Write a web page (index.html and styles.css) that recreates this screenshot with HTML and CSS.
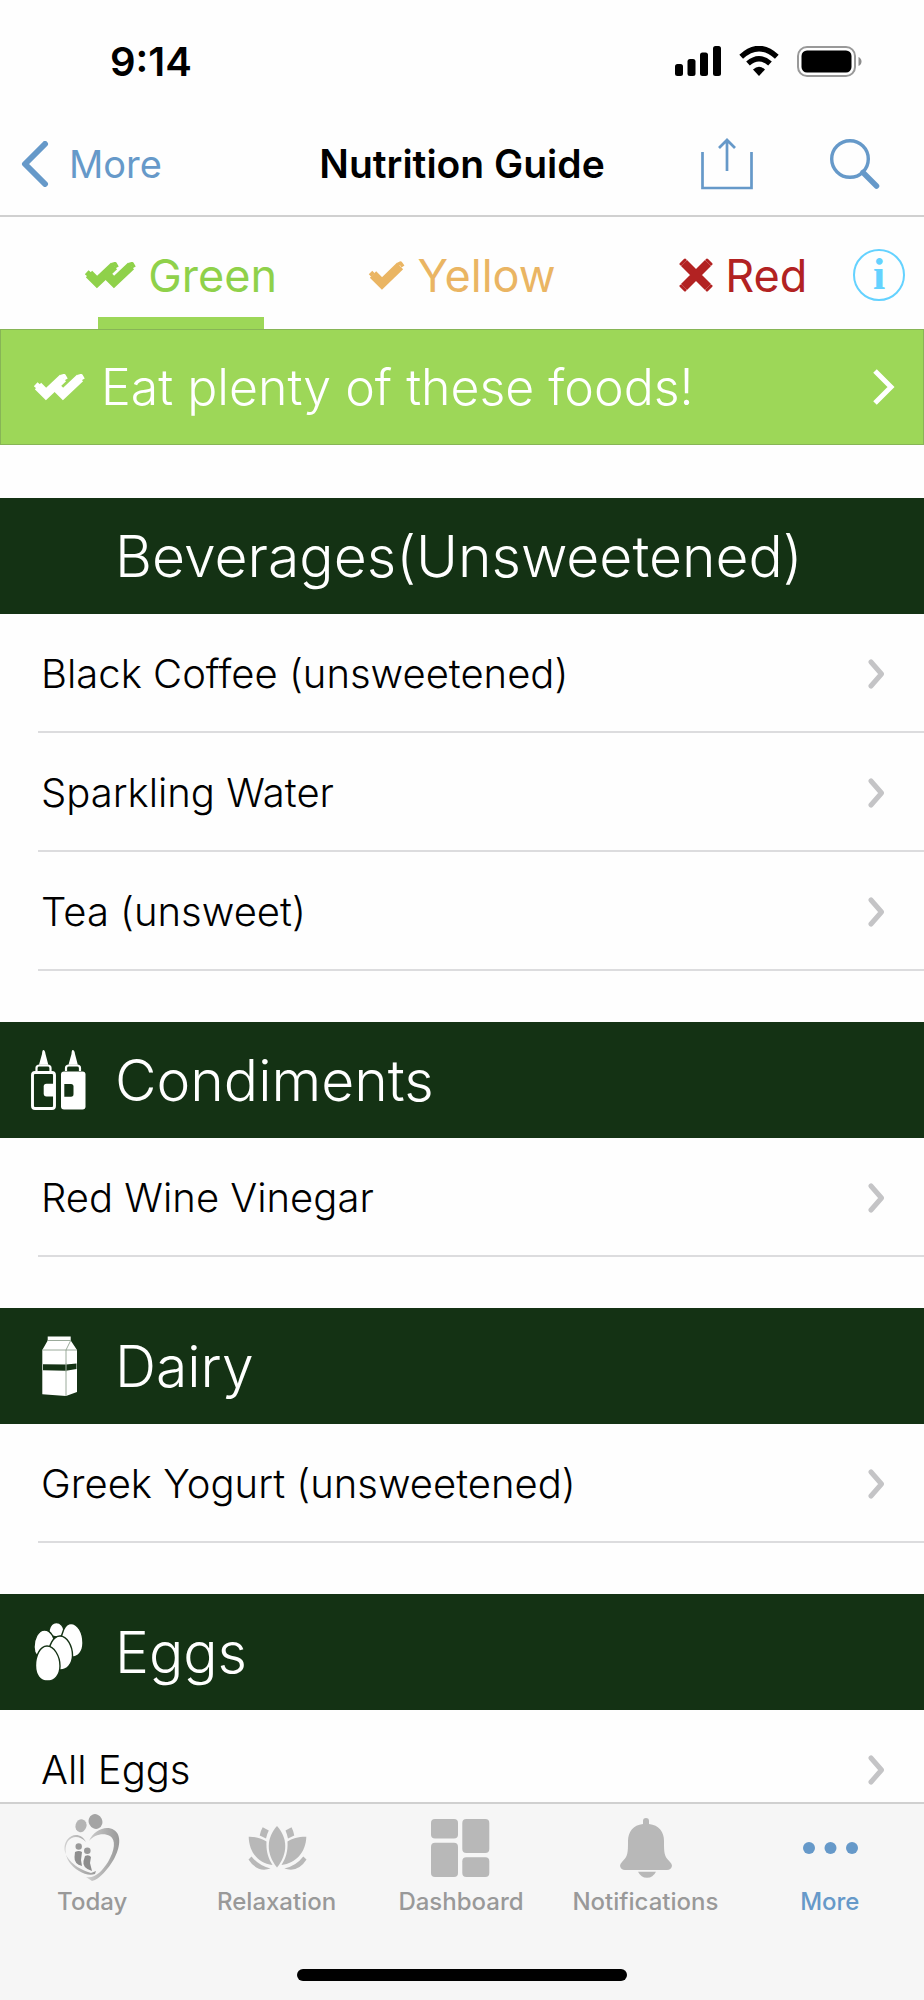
FILE: index.html
```html
<!DOCTYPE html>
<html lang="en">

<head>
    <meta charset="UTF-8">
    <meta name="viewport" content="width=device-width, initial-scale=1.0">
    <title>Nutrition Guide</title>
    <link rel="stylesheet" href="styles.css">
</head>

<body>
    <!-- shared icons -->
    <svg class="sprite" aria-hidden="true">
        <symbol id="chevron" viewBox="0 0 16 30">
            <path d="M3 3 L13.500 15 L3 27" fill="none" stroke="currentColor" stroke-width="5" stroke-linecap="round" stroke-linejoin="round" />
        </symbol>
        <symbol id="double-check" viewBox="0 0 52 27">
            <g fill="none" stroke="currentColor" stroke-width="9">
                <path d="M5 12 L13 20 L30 4" />
                <path d="M22 12 L30 20 L47 4" />
            </g>
            <g fill="none" stroke="currentColor" stroke-width="4" stroke-linejoin="round">
                <path d="M2.300 13.500 L6 9.500 M27.500 3 L31 2 L33 5.500 M44.500 3 L48 2 L50 5.500" />
            </g>
        </symbol>
    </svg>

    <div class="status-bar">
        <span class="time">9:14</span>
        <div class="status-icons">
            <svg width="46" height="30" viewBox="0 0 46 30">
                <rect x="0" y="18" width="8" height="12" rx="2.500" />
                <rect x="12.500" y="13" width="8" height="17" rx="2.500" />
                <rect x="25" y="6.500" width="8" height="23.500" rx="2.500" />
                <rect x="38" y="0" width="8" height="30" rx="2.500" />
            </svg>
            <svg width="40" height="30" viewBox="0 0 40 30">
                <path d="M20 30 L14 23.500 Q20 18 26 23.500 Z" />
                <path d="M9 17.500 Q20 8 31 17.500" fill="none" stroke="#000" stroke-width="5.500" />
                <path d="M2.200 10.700 Q20 -5.500 37.800 10.700" fill="none" stroke="#000" stroke-width="5.500" />
            </svg>
            <svg width="65" height="31" viewBox="0 0 65 31">
                <rect x="1" y="1" width="57" height="29" rx="9" fill="none" stroke="#999" stroke-width="2" />
                <rect x="4.500" y="4.500" width="50" height="22" rx="5.500" />
                <path d="M61.500 11 Q64.500 12.500 64.500 15.500 Q64.500 18.500 61.500 20 Z" fill="#8c8c8c" />
            </svg>
        </div>
    </div>

    <header class="nav-bar">
        <a class="back" href="#more">
            <svg width="28" height="46" viewBox="0 0 28 46">
                <path d="M24 3 L4 23 L24 43" fill="none" stroke="currentColor" stroke-width="6" stroke-linecap="round" stroke-linejoin="round" />
            </svg>
            More
        </a>
        <h1>Nutrition Guide</h1>
        <div class="nav-actions">
            <button type="button" aria-label="Share">
                <svg width="52" height="52" viewBox="0 0 52 52">
                    <path d="M1.500 14 V50 H50.500 V14 M26 33 V2 M18 10 L26 2 L34 10" fill="none" stroke="currentColor" stroke-width="2.700" />
                </svg>
            </button>
            <button type="button" aria-label="Search">
                <svg width="50" height="50" viewBox="0 0 50 50">
                    <circle cx="20" cy="20" r="18.300" fill="none" stroke="currentColor" stroke-width="3.400" />
                    <path d="M33 33.500 L46.500 47" stroke="currentColor" stroke-width="5.500" stroke-linecap="round" />
                </svg>
            </button>
        </div>
    </header>

    <nav class="tabs">
        <a class="tab green active" href="#green">
            <svg width="52" height="27"><use href="#double-check" /></svg>
            Green
        </a>
        <a class="tab yellow" href="#yellow">
            <svg width="37" height="29" viewBox="0 0 37 29">
                <path d="M5 13.500 L14 22.500 L32 5" fill="none" stroke="currentColor" stroke-width="9" />
                <path d="M2 14.500 L5.500 11 M29.500 3.500 L32.500 2 L35 5.500" fill="none" stroke="currentColor" stroke-width="3.500" stroke-linejoin="round" />
            </svg>
            Yellow
        </a>
        <a class="tab red" href="#red">
            <svg width="34" height="34" viewBox="0 0 34 34">
                <path d="M5 5 L29 29 M29 5 L5 29" stroke="currentColor" stroke-width="8.500" />
                <path d="M2 6 L6 2 M28 2 L32 6 M2 28 L6 32 M28 32 L32 28" stroke="currentColor" stroke-width="3" stroke-linecap="round" />
            </svg>
            Red
        </a>
        <button class="info" type="button" aria-label="Info">i</button>
    </nav>

    <main>
        <a class="banner" href="#plenty">
            <svg width="52" height="27"><use href="#double-check" /></svg>
            <span>Eat plenty of these foods!</span>
            <svg width="22" height="36" viewBox="0 0 22 36">
                <path d="M2 2 L18 18 L2 34" fill="none" stroke="currentColor" stroke-width="5" />
            </svg>
        </a>

        <section>
            <h2><span class="icon"></span>Beverages(Unsweetened)</h2>
            <ul>
                <li><a href="#coffee">Black Coffee (unsweetened)<svg width="16" height="30"><use href="#chevron" /></svg></a></li>
                <li><a href="#water">Sparkling Water<svg width="16" height="30"><use href="#chevron" /></svg></a></li>
                <li><a href="#tea">Tea (unsweet)<svg width="16" height="30"><use href="#chevron" /></svg></a></li>
            </ul>
        </section>

        <section>
            <h2>
                <svg class="icon" viewBox="0 0 58 60">
                    <path d="M13.300 0 Q15 0 15.500 4 L18.300 14.800 H9 L12 4 Q12.300 0 13.300 0 Z" fill="#fff" />
                    <path d="M6.500 21 V18 Q6.500 15.500 9.500 15.500 H17.500 Q20.500 15.500 20.500 18 V21" fill="none" stroke="#fff" stroke-width="2.200" />
                    <rect x="2.500" y="22.500" width="22" height="36" rx="2.500" fill="none" stroke="#fff" stroke-width="2.900" />
                    <path d="M24 33.800 H16.500 Q13.700 33.800 13.700 36.500 V43.500 Q13.700 46.500 16.500 46.500 H24 Z" fill="#fff" />
                    <path d="M42.700 0 Q44.500 0 45 4 L47.800 14.800 H38.500 L41.500 4 Q41.700 0 42.700 0 Z" fill="#fff" />
                    <path d="M36 21 V18 Q36 15.500 39 15.500 H47 Q50 15.500 50 18 V21" fill="none" stroke="#fff" stroke-width="2.200" />
                    <rect x="31" y="21.500" width="24.500" height="38" rx="3" fill="#fff" />
                    <path d="M34.300 34 H41 Q43.500 34 43.500 36.500 V44 Q43.500 46.800 41 46.800 H34.300 Z" fill="#143214" />
                </svg>
                Condiments
            </h2>
            <ul>
                <li><a href="#vinegar">Red Wine Vinegar<svg width="16" height="30"><use href="#chevron" /></svg></a></li>
            </ul>
        </section>

        <section>
            <h2>
                <svg class="icon" viewBox="0 0 58 60">
                    <path d="M17.700 0.500 H40.700 V4.500 L47 14 V56 L36 60 L12.300 58.300 V14 L17.700 4.500 Z" fill="#fff" />
                    <path d="M17.700 4.500 H40.700 L36 14 V60 M12.300 14 H47" fill="none" stroke="#8fa08f" stroke-width="0.900" />
                    <path d="M13 28.300 L36 28.500 L46.500 27.500 V33 L36 34.800 L13 34.300 Z" fill="#143214" />
                    <path d="M36 27 V36" stroke="#b5c2b5" stroke-width="0.900" />
                </svg>
                Dairy
            </h2>
            <ul>
                <li><a href="#yogurt">Greek Yogurt (unsweetened)<svg width="16" height="30"><use href="#chevron" /></svg></a></li>
            </ul>
        </section>

        <section>
            <h2>
                <svg class="icon" viewBox="0 0 58 60">
                    <g fill="#fff" stroke="#143214" stroke-width="1.400">
                        <path d="M26.300 0.500 C31 0.500 34 5 34 9 C34 13 31 15 26.500 15 C22 15 19 12 19 8 C20 4 22.500 0.500 26.300 0.500 Z" />
                        <path d="M14.500 8 C21 8 25.500 17 25.500 25 C25.500 32 21 36 14.500 36 C8 36 4 32 4 25 C4 17 8 8 14.500 8 Z" />
                        <path d="M41 1.500 C48 1.500 53 11 53 21 C53 30 48 35 42 35 C35 35 31 29 31 20 C31 11 35 1.500 41 1.500 Z" />
                        <path d="M30 14 C37 14 42.500 24 42.500 33.500 C42.500 42 37 48 30.500 48 C23 48 18.500 42 18.500 33 C18.500 24 23 14 30 14 Z" />
                        <path d="M17 24 C24 24 30 34 30 44 C30 53 25 59 17.500 59 C10 59 5.500 53 5.500 43.500 C5.500 34 10 24 17 24 Z" />
                    </g>
                </svg>
                Eggs
            </h2>
            <ul>
                <li><a href="#eggs">All Eggs<svg width="16" height="30"><use href="#chevron" /></svg></a></li>
            </ul>
        </section>
    </main>

    <footer class="tab-bar">
        <nav>
            <a href="#today">
                <svg width="64" height="68" viewBox="0 0 64 68">
                    <defs>
                        <linearGradient id="heart" x1="0" y1="0" x2="1" y2="0">
                            <stop offset="0" stop-color="#d0d0d0" />
                            <stop offset="1" stop-color="#999" />
                        </linearGradient>
                    </defs>
                    <ellipse cx="21" cy="11.700" rx="5.500" ry="6.500" fill="#b4b4b4" transform="rotate(15 21 11.700)" />
                    <ellipse cx="35.500" cy="7.500" rx="6.800" ry="7.500" fill="#a4a4a4" transform="rotate(-25 35.500 7.500)" />
                    <path d="M26 28 C22 20 13 18 7 26 C-1 38 11 53 31 59 L36 57 L35 60 C30 62 24 60 19 57 C7 50 2 37 8 27 C13 21 20 22 26 28 Z" fill="url(#heart)" />
                    <path d="M29 27 C34 16 46 11 54 16 C62 21 60 34 54 45 C48 55 40 65 32 67 L26 63 C35 65 42 57 48 48 C55 36 56 26 50 22 C43 18 34 21 29 27 Z" fill="url(#heart)" />
                    <circle cx="18.700" cy="32.500" r="3.200" fill="#999" />
                    <circle cx="27.300" cy="36.700" r="3.300" fill="#999" />
                    <path d="M15 38 Q19 36 22 38 L21 46 L22 52 Q14 50 14.500 43 Z M25 42 Q29 40 31 43 L30 49 L32 57 Q22 54 23.500 47 Z" fill="#8e8e8e" />
                </svg>
                Today
            </a>
            <a href="#relaxation">
                <svg width="64" height="68" viewBox="0 0 64 68" fill="#b8b8b8">
                    <path d="M32 12 C43 24 43 40 32 53.500 C21 40 21 24 32 12 Z" />
                    <path d="M3.700 22.700 C11 22.500 17 24.500 21.500 27.500 C21 37 23 44 27.500 51 C13 49 4 38 3.700 22.700 Z" />
                    <path d="M61.300 22.700 C54 22.500 47 24.500 42.500 27.500 C43 37 41 44 36.500 51 C51 49 61 38 61.300 22.700 Z" />
                    <path d="M17.700 13.300 L23.800 16.500 Q22 20 21 24.500 L14.700 21.500 Q15.500 17 17.700 13.300 Z" />
                    <path d="M46.500 13.300 L40.500 16.500 Q42 20 43 24.500 L49.300 21.500 Q48.500 17 46.500 13.300 Z" />
                    <path d="M6.500 42.500 L3.500 45.500 Q12 59 25.500 54.500 Q14 52 6.500 42.500 Z" />
                    <path d="M58.300 42.500 L61.500 45.500 Q53 59 39.300 54.500 Q51 52 58.300 42.500 Z" />
                </svg>
                Relaxation
            </a>
            <a href="#dashboard">
                <svg width="64" height="68" viewBox="0 0 64 68" fill="#b8b8b8">
                    <rect x="2" y="5" width="27" height="19.500" rx="4" />
                    <rect x="2" y="28.700" width="27" height="34.300" rx="4" />
                    <rect x="33.300" y="5" width="27" height="34" rx="4" />
                    <rect x="33.300" y="43.300" width="27" height="19.700" rx="4" />
                </svg>
                Dashboard
            </a>
            <a href="#notifications">
                <svg width="64" height="68" viewBox="0 0 64 68" fill="#b8b8b8">
                    <path d="M30 10 V7 Q30 4 33 4 Q36 4 36 7 V10 C46 11 51 18 51 27 C51 39 51 42 57 48 Q59 50 59 52 Q58 56 54 56 H12 Q8 56 7 52 Q7 50 9 48 C15 42 15 39 15 27 C15 18 20 11 30 10 Z" />
                    <path d="M25 57.700 H43 Q40 63.700 34 63.700 Q28 63.700 25 57.700 Z" />
                </svg>
                Notifications
            </a>
            <a class="current" href="#more">
                <svg width="64" height="68" viewBox="0 0 64 68" fill="currentColor">
                    <circle cx="11" cy="34" r="6" />
                    <circle cx="32.500" cy="34" r="6" />
                    <circle cx="54" cy="34" r="6" />
                </svg>
                More
            </a>
        </nav>
        <div class="home-indicator"></div>
    </footer>
</body>

</html>
```
FILE: styles.css
```css
* {
    padding: 0;
    margin: 0;
    box-sizing: border-box;
}

body {
    display: flex;
    flex-direction: column;
    height: 100vh;
    background-color: #fefefe;
    color: #000;
    font-family: Inter, "Liberation Sans", sans-serif;
}

a {
    color: inherit;
    text-decoration: none;
}

button {
    background: none;
    border: none;
    color: inherit;
    cursor: pointer;
}

svg {
    display: block;
    flex-shrink: 0;
}

.sprite {
    width: 0;
    height: 0;
    position: absolute;
}

.status-bar {
    display: flex;
    justify-content: space-between;
    align-items: center;
    flex-shrink: 0;
    height: 112px;
    padding: 10px 62px 0 110px;
}

.time {
    font-size: 40px;
    font-weight: 600;
}

.status-icons {
    display: flex;
    align-items: center;
    gap: 18px;
}

.nav-bar {
    display: grid;
    grid-template-columns: 1fr auto 1fr;
    align-items: center;
    flex-shrink: 0;
    height: 105px;
    padding: 0 21px;
    border-bottom: 2px solid #d0d0d0;
}

.nav-bar h1 {
    font-size: 39px;
    font-weight: 600;
}

.back {
    display: flex;
    align-items: center;
    gap: 20px;
    color: #6699c9;
    font-size: 38px;
}

.nav-actions {
    display: flex;
    justify-content: flex-end;
    align-items: center;
    gap: 77px;
    padding-right: 23px;
    color: #6699c9;
}

.tabs {
    position: relative;
    display: grid;
    grid-template-columns: 1fr 1fr 1fr;
    flex-shrink: 0;
    height: 112px;
    padding: 0 40px;
}

.tab {
    display: flex;
    justify-content: center;
    align-items: center;
    gap: 12px;
    padding-top: 4px;
    font-size: 45px;
}

.green {
    color: #8fd14a;
}

.yellow {
    color: #eab563;
}

.red {
    color: #b22222;
}

.active {
    position: relative;
}

.active::after {
    content: "";
    position: absolute;
    bottom: 0;
    width: 166px;
    height: 12px;
    background-color: #9dd758;
}

.info {
    position: absolute;
    top: 32px;
    right: 19px;
    width: 52px;
    height: 52px;
    border: 2px solid #64d2ff;
    border-radius: 50%;
    color: #64d2ff;
    font-family: "Liberation Serif", serif;
    font-size: 44px;
    font-weight: bold;
    line-height: 46px;
}

main {
    flex: 1;
    overflow-y: auto;
    scrollbar-width: none;
}

.banner {
    display: flex;
    align-items: center;
    gap: 16px;
    height: 116px;
    margin-bottom: 53px;
    padding: 0 28px 0 32px;
    background-color: #9dd758;
    border: 1px solid #87b556;
    color: #fff;
    font-size: 50px;
    font-weight: 300;
}

.banner span {
    flex: 1;
}

section {
    margin-bottom: 51px;
}

h2 {
    display: flex;
    align-items: center;
    gap: 27px;
    height: 116px;
    padding-left: 30px;
    background-color: #143214;
    color: #fff;
    font-size: 57px;
    font-weight: 300;
}

.icon {
    width: 58px;
    height: 60px;
}

ul {
    list-style: none;
    padding-left: 38px;
}

li a {
    display: flex;
    justify-content: space-between;
    align-items: center;
    height: 119px;
    padding: 2px 40px 0 3px;
    border-bottom: 2px solid #dcdcde;
    font-size: 40px;
    font-weight: 300;
}

li svg {
    color: #c4c4c6;
}

.tab-bar {
    flex-shrink: 0;
    height: 198px;
    padding-top: 10px;
    background-color: #f6f6f6;
    border-top: 2px solid #d0d0d0;
    color: #999;
}

.tab-bar nav {
    display: grid;
    grid-template-columns: repeat(5, 1fr);
    padding-right: 2px;
}

.tab-bar nav a {
    display: flex;
    flex-direction: column;
    align-items: center;
    gap: 5px;
    font-size: 24px;
    font-weight: 500;
    line-height: 30px;
}

.tab-bar .current {
    color: #6699c9;
}

.home-indicator {
    width: 330px;
    height: 12px;
    margin: 52px auto 0;
    border-radius: 6px;
    background-color: #000;
}
```
